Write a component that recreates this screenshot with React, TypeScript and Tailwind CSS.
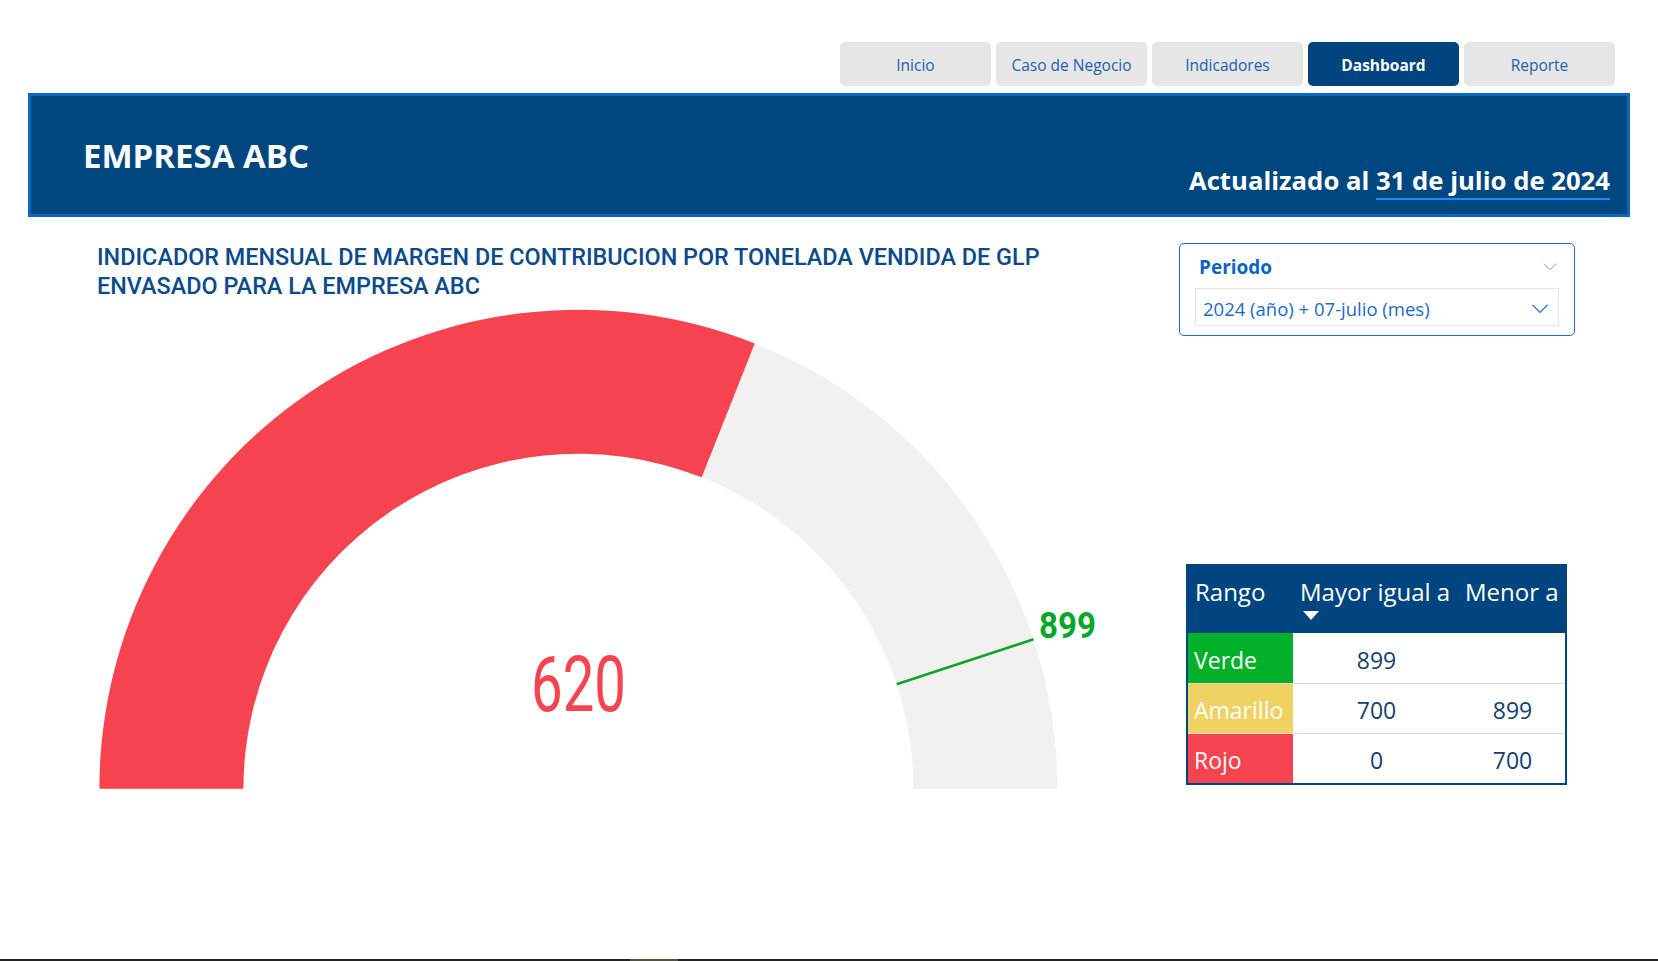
import React from "react";

const navItems = ["Inicio", "Caso de Negocio", "Indicadores", "Dashboard", "Reporte"];

function Chevron({ className }: { className?: string }) {
  return (
    <svg viewBox="0 0 20 12" className={className} fill="none" stroke="currentColor" strokeWidth="1.4">
      <path d="M1 1 L10 10 L19 1" />
    </svg>
  );
}

function Gauge() {
  const cx = 578.4;
  const cy = 488.8;
  const R = 479;
  const r = 335;
  const pt = (rad: number, deg: number) => {
    const a = (deg * Math.PI) / 180;
    return [cx + rad * Math.cos(a), cy - rad * Math.sin(a)];
  };
  const valDeg = 180 - 0.62 * 180;
  const [ox, oy] = pt(R, valDeg);
  const [ix, iy] = pt(r, valDeg);
  const tDeg = 180 - 0.899 * 180;
  const [tix, tiy] = pt(r, tDeg);
  const [tox, toy] = pt(R, tDeg);
  const red = `M ${cx - R} ${cy} A ${R} ${R} 0 0 1 ${ox} ${oy} L ${ix} ${iy} A ${r} ${r} 0 0 0 ${cx - r} ${cy} Z`;
  const gray = `M ${cx - R} ${cy} A ${R} ${R} 0 0 1 ${cx + R} ${cy} L ${cx + r} ${cy} A ${r} ${r} 0 0 0 ${cx - r} ${cy} Z`;
  return (
    <svg width="1120" height="507" viewBox="0 0 1120 507" className="block">
      <path d={gray} fill="#f2f1f0" />
      <path d={red} fill="#f5434f" />
      <line x1={tix} y1={tiy} x2={tox} y2={toy} stroke="#0aa52f" strokeWidth="2.6" />
      <text
        x="1039"
        y="338"
        fill="#05a82c"
        fontFamily="Roboto, 'Liberation Sans', sans-serif"
        fontWeight="700"
        fontSize="37"
        textLength="57"
        lengthAdjust="spacingAndGlyphs"
      >
        899
      </text>
      <text
        x="531"
        y="411"
        fill="#f5434f"
        fontFamily="Roboto, 'Liberation Sans', sans-serif"
        fontWeight="400"
        fontSize="77"
        textLength="95"
        lengthAdjust="spacingAndGlyphs"
      >
        620
      </text>
    </svg>
  );
}

const rows = [
  { name: "Verde", bg: "bg-[#02b02a]", a: "899", b: "" },
  { name: "Amarillo", bg: "bg-[#f0d163]", a: "700", b: "899" },
  { name: "Rojo", bg: "bg-[#f5434f]", a: "0", b: "700" },
];

export default function App() {
  return (
    <div
      className="w-[1658px] h-[961px] bg-white flex flex-col overflow-hidden"
      style={{ fontFamily: "'Open Sans', 'Liberation Sans', sans-serif" }}
    >
      {/* Nav */}
      <div className="flex justify-end gap-[5px] pt-[42px] pr-[43px]">
        {navItems.map((n) => (
          <div
            key={n}
            className={
              n === "Dashboard"
                ? "w-[151px] h-[44px] pt-[4px] rounded-[5px] bg-[#00457f] text-white font-bold text-[15.5px] flex items-center justify-center"
                : "w-[151px] h-[44px] pt-[4px] rounded-[5px] bg-[#e6e6e6] text-[#1d5fae] text-[15.5px] flex items-center justify-center"
            }
          >
            {n}
          </div>
        ))}
      </div>

      {/* Banner */}
      <div className="mt-[7px] mx-[28px] h-[124px] border-[3px] border-[#0a67c4] bg-[#00467f] flex justify-between">
        <div className="pl-[52px] pt-[39px] text-white font-bold text-[33px] leading-[42px]">EMPRESA ABC</div>
        <div className="self-end pr-[17px] pb-[16px] text-white font-bold text-[25.7px] leading-[34px]">
          Actualizado al{" "}
          <span className="border-b-[2px] border-[#1a8cff]">31 de julio de 2024</span>
        </div>
      </div>

      {/* Main */}
      <div className="flex">
        <div className="w-[1120px] flex flex-col">
          <div
            className="pl-[97px] pt-[26px] text-[23.4px] leading-[28.5px] font-medium text-[#0b4a8b]"
            style={{ fontFamily: "Roboto, 'Liberation Sans', sans-serif" }}
          >
            <div>INDICADOR MENSUAL DE MARGEN DE CONTRIBUCION POR TONELADA VENDIDA DE GLP</div>
            <div>ENVASADO PARA LA EMPRESA ABC</div>
          </div>
          <Gauge />
        </div>

        <div className="flex flex-col pt-[26px]">
          {/* Slicer */}
          <div className="ml-[59px] w-[396px] h-[93px] border-[1.5px] border-[#1a6ec6] rounded-[5px] px-[15px] pt-[10px]">
            <div className="flex items-center justify-between pl-[4px] pr-[2px]">
              <span className="text-[#0b63c5] font-bold text-[19px] leading-[26px]">Periodo</span>
              <Chevron className="w-[14px] h-[8px] text-[#7f8ea3]" />
            </div>
            <div className="mt-[8px] h-[38px] border border-[#e4e4e4] flex items-center justify-between pl-[7px] pr-[9px] pt-[3px]">
              <span className="text-[#1a6bc9] text-[18.5px]">2024 (año) + 07-julio (mes)</span>
              <Chevron className="w-[18px] h-[10px] text-[#1a6bc9]" />
            </div>
          </div>

          {/* Table */}
          <div className="ml-[66px] mt-[228px] w-[381px] border-2 border-t-0 border-[#00457f]">
            <div className="h-[69px] bg-[#00457f] text-white text-[24px] flex">
              <div className="w-[105px] pl-[7px] pt-[12px] leading-[32px]">Rango</div>
              <div className="w-[167px] pl-[7px] pt-[12px] leading-[32px] relative">
                Mayor igual a
                <div className="absolute left-[10px] top-[47px] w-0 h-0 border-l-[8px] border-r-[8px] border-t-[9px] border-l-transparent border-r-transparent border-t-white" />
              </div>
              <div className="flex-1 pl-[5px] pt-[12px] leading-[32px] whitespace-nowrap">Menor a</div>
            </div>
            {rows.map((row, i) => (
              <div key={row.name} className={"h-[50px] flex text-[23px]" + (i > 0 ? " border-t border-[#dcdcdc]" : "")}>
                <div className={"w-[105px] text-white pl-[6px] pt-[4px] flex items-center " + row.bg}>{row.name}</div>
                <div className="w-[167px] pt-[4px] flex items-center justify-center text-[#143e6e]">{row.a}</div>
                <div className="flex-1 pt-[4px] flex items-center justify-center text-[#143e6e]">{row.b}</div>
              </div>
            ))}
          </div>
        </div>
      </div>

      <div className="mt-auto h-[2px] bg-[#252423] flex">
        <div className="ml-[630px] w-[48px] h-full bg-[#55533f]" />
      </div>
    </div>
  );
}
